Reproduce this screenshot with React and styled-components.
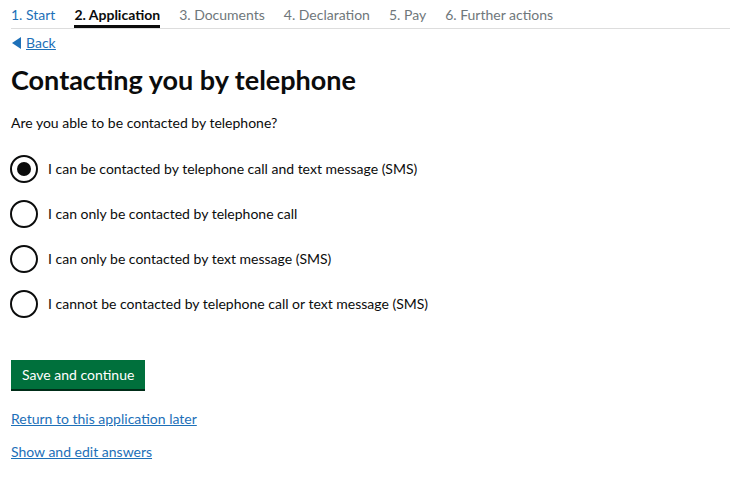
import React from 'react'
import styled, { createGlobalStyle } from 'styled-components'

const GlobalStyle = createGlobalStyle`
    body {
        margin: 0;
        background: #ffffff;
        font-family: Lato, "Noto Sans", Arial, sans-serif;
        color: #0b0c0c;
    }
`;

const steps = [
    { label: '1. Start', state: 'done' },
    { label: '2. Application', state: 'active' },
    { label: '3. Documents', state: 'todo' },
    { label: '4. Declaration', state: 'todo' },
    { label: '5. Pay', state: 'todo' },
    { label: '6. Further actions', state: 'todo' },
];

const options = [
    'I can be contacted by telephone call and text message (SMS)',
    'I can only be contacted by telephone call',
    'I can only be contacted by text message (SMS)',
    'I cannot be contacted by telephone call or text message (SMS)',
];

function App() {
    const [choice, setChoice] = React.useState(0);
    return (
        <>
            <GlobalStyle />
            <PageStyled>
                <StepNav>
                    {steps.map((s) => (
                        <Step key={s.label} state={s.state}>{s.label}</Step>
                    ))}
                </StepNav>
                <BackLink href="#">
                    <svg width="9" height="12" viewBox="0 0 9 12">
                        <path d="M9 0 L0 6 L9 12 Z" fill="#1d70b8" />
                    </svg>
                    <span>Back</span>
                </BackLink>
                <Heading>Contacting you by telephone</Heading>
                <Question>Are you able to be contacted by telephone?</Question>
                <RadioList>
                    {options.map((o, i) => (
                        <RadioRow key={o} onClick={() => setChoice(i)}>
                            <RadioCircle checked={choice === i} />
                            <RadioLabel>{o}</RadioLabel>
                        </RadioRow>
                    ))}
                </RadioList>
                <Button>Save and continue</Button>
                <TextLink href="#">Return to this application later</TextLink>
                <TextLink href="#">Show and edit answers</TextLink>
            </PageStyled>
        </>
    )
}

const PageStyled = styled.div`
    padding: 0 10px 0 11px;
    display: flex;
    flex-direction: column;
    align-items: flex-start;
`;

const StepNav = styled.nav`
    align-self: stretch;
    display: flex;
    gap: 19px;
    border-bottom: 1px solid #dddddd;
    height: 29px;
    box-sizing: border-box;
`;

const Step = styled.span`
    font-size: 14px;
    line-height: 15px;
    padding-top: 7px;
    height: 28px;
    box-sizing: border-box;
    color: ${p => p.state === 'done' ? '#1d70b8' : p.state === 'active' ? '#0b0c0c' : '#6f777b'};
    font-weight: ${p => p.state === 'active' ? 700 : 400};
    border-bottom: 3px solid ${p => p.state === 'active' ? '#0b0c0c' : 'transparent'};
`;

const BackLink = styled.a`
    margin-top: 5px;
    display: flex;
    align-items: center;
    gap: 5px;
    color: #1d70b8;
    font-size: 14px;
    line-height: 18px;
    padding-left: 1px;
    span {
        text-decoration: underline;
    }
`;

const Heading = styled.h1`
    margin: 12px 0 0;
    font-size: 27px;
    line-height: 32px;
    font-weight: 700;
`;

const Question = styled.p`
    margin: 17px 0 0;
    font-size: 14px;
    line-height: 20px;
`;

const RadioList = styled.div`
    margin-top: 22px;
    display: flex;
    flex-direction: column;
    gap: 17px;
`;

const RadioRow = styled.label`
    display: flex;
    align-items: center;
    gap: 10px;
    cursor: pointer;
`;

const RadioCircle = styled.span`
    width: 28px;
    height: 28px;
    box-sizing: border-box;
    border: 2px solid #0b0c0c;
    border-radius: 50%;
    margin-left: -1px;
    display: flex;
    align-items: center;
    justify-content: center;
    &::after {
        content: '';
        width: 14px;
        height: 14px;
        border-radius: 50%;
        background: #0b0c0c;
        display: ${p => p.checked ? 'block' : 'none'};
    }
`;

const RadioLabel = styled.span`
    font-size: 14px;
    line-height: 20px;
`;

const Button = styled.button`
    margin-top: 42px;
    background: #00703c;
    color: #ffffff;
    border: 0;
    box-shadow: 0 2px 0 #002d18;
    font-family: inherit;
    font-size: 14px;
    line-height: 20px;
    padding: 5px 11px 4px;
    height: 29px;
    cursor: pointer;
`;

const TextLink = styled.a`
    margin-top: 20px;
    color: #1d70b8;
    font-size: 14px;
    line-height: 20px;
    text-decoration: underline;
    & + & {
        margin-top: 13px;
    }
`;

export default App;
